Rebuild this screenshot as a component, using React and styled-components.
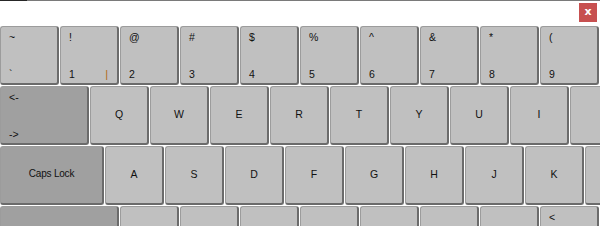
import React from 'react';
import styled, { createGlobalStyle } from 'styled-components';

const Global = createGlobalStyle`
  html, body { margin: 0; padding: 0; background: #fff; }
  body { font-family: "Liberation Sans", Arial, sans-serif; }
`;

const Window = styled.div`
  width: 600px;
  height: 226px;
  overflow: hidden;
  background: #fff;
  display: flex;
  flex-direction: column;
`;

const TitleBar = styled.div`
  height: 26px;
  flex: none;
  border-top: 1px solid #7a7a7a;
  display: flex;
  justify-content: flex-end;
  align-items: flex-start;
  padding: 2px 3px 0 0;
  box-sizing: border-box;
  position: relative;
  &::before {
    content: '';
    position: absolute;
    top: -1px;
    left: 0;
    width: 27px;
    height: 1px;
    background: #262626;
  }
`;

const CloseButton = styled.button`
  width: 18px;
  height: 19px;
  border: none;
  padding: 0 0 3px;
  background: #c75050;
  color: #fff;
  font-family: "DejaVu Sans", sans-serif;
  font-weight: bold;
  font-size: 11px;
  line-height: 1;
  cursor: pointer;
`;

const Board = styled.div`
  display: flex;
  flex-direction: column;
  gap: 1px;
`;

const Row = styled.div`
  display: flex;
  gap: 1px;
  height: 59px;
  flex: none;
`;

const Key = styled.div`
  box-sizing: border-box;
  flex: none;
  width: ${(p) => p.$w - 1}px;
  height: 59px;
  background: ${(p) => (p.$mod ? '#a0a0a0' : '#c0c0c0')};
  border: 1px solid #9c9c9c;
  border-right: 2px solid #6b6b6b;
  border-bottom: 2px solid #6b6b6b;
  border-radius: 3px;
  color: #111;
  font-size: 10.5px;
  position: relative;
  display: flex;
  align-items: center;
  justify-content: center;
`;

const Corner = styled.span`
  position: absolute;
  left: 8px;
  ${(p) => (p.$bottom ? 'bottom: 3px;' : 'top: 4px;')}
  font-size: 10.5px;
  line-height: 12px;
`;

const Bar = styled.span`
  position: absolute;
  right: 9px;
  bottom: 3px;
  line-height: 12px;
  font-size: 11px;
  color: #b06a1a;
`;

const Caption = styled.span`
  font-size: 10px;
  letter-spacing: -0.2px;
  margin-bottom: 3px;
`;

const Letter = styled.span`
  margin-bottom: 3px;
`;

const numberRow = [
  ['~', '`'], ['!', '1'], ['@', '2'], ['#', '3'], ['$', '4'],
  ['%', '5'], ['^', '6'], ['&', '7'], ['*', '8'], ['(', '9'],
];

function SplitKey({ top, bottom, w = 60, mod, children }) {
  return (
    <Key $w={w} $mod={mod}>
      <Corner>{top}</Corner>
      {bottom && <Corner $bottom>{bottom}</Corner>}
      {children}
    </Key>
  );
}

function LetterKey({ label, w = 60 }) {
  return <Key $w={w}>{label && <Letter>{label}</Letter>}</Key>;
}

export default function App() {
  return (
    <>
      <Global />
      <Window>
        <TitleBar>
          <CloseButton>x</CloseButton>
        </TitleBar>
        <Board>
          <Row>
            {numberRow.map(([t, b]) => (
              <SplitKey key={b} top={t} bottom={b}>
                {b === '1' && <Bar>|</Bar>}
              </SplitKey>
            ))}
          </Row>
          <Row>
            <SplitKey w={90} mod top="<-" bottom="->" />
            {['Q', 'W', 'E', 'R', 'T', 'Y', 'U', 'I', ''].map((l, i) => (
              <LetterKey key={i} label={l} />
            ))}
          </Row>
          <Row>
            <Key $w={105} $mod>
              <Caption>Caps Lock</Caption>
            </Key>
            {['A', 'S', 'D', 'F', 'G', 'H', 'J', 'K', ''].map((l, i) => (
              <LetterKey key={i} label={l} />
            ))}
          </Row>
          <Row>
            <Key $w={120} $mod />
            {[0, 1, 2, 3, 4, 5, 6].map((i) => (
              <LetterKey key={i} />
            ))}
            <SplitKey top="<" />
          </Row>
        </Board>
      </Window>
    </>
  );
}
